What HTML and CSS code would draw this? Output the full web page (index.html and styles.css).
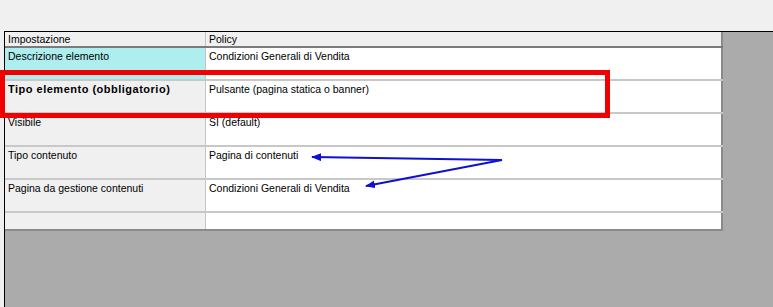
FILE: index.html
```html
<!DOCTYPE html>
<html lang="it">

<head>
    <meta charset="utf-8">
    <title>Impostazioni elemento</title>
    <link rel="stylesheet" href="styles.css">
</head>

<body>

    <div class="toolbar"></div>

    <div class="pannello">
        <table class="griglia">
            <tr class="intestazione">
                <th>Impostazione</th>
                <th>Policy</th>
            </tr>
            <tr>
                <td class="selezionata">Descrizione elemento</td>
                <td>Condizioni Generali di Vendita</td>
            </tr>
            <tr>
                <td class="obbligatorio">Tipo elemento (obbligatorio)</td>
                <td>Pulsante (pagina statica o banner)</td>
            </tr>
            <tr>
                <td>Visibile</td>
                <td>SI (default)</td>
            </tr>
            <tr>
                <td>Tipo contenuto</td>
                <td>Pagina di contenuti</td>
            </tr>
            <tr>
                <td>Pagina da gestione contenuti</td>
                <td>Condizioni Generali di Vendita</td>
            </tr>
            <tr class="vuota">
                <td></td>
                <td></td>
            </tr>
        </table>
    </div>

    <!-- segni a mano sopra la griglia -->
    <svg class="note" width="773" height="307" viewBox="0 0 773 307">
        <defs>
            <marker id="punta" markerWidth="10" markerHeight="8" refX="9" refY="4" orient="auto" markerUnits="userSpaceOnUse">
                <path d="M0,0 L10,4 L0,8 Z" fill="#1010d0" />
            </marker>
        </defs>
        <rect x="2.5" y="72.5" width="605" height="43" fill="none" stroke="#f00000" stroke-width="5" />
        <line x1="502" y1="160" x2="312" y2="157" stroke="#1010d0" stroke-width="2" marker-end="url(#punta)" />
        <line x1="502" y1="160" x2="366" y2="186" stroke="#1010d0" stroke-width="2" marker-end="url(#punta)" />
    </svg>

</body>

</html>
```

FILE: styles.css
```css
body {
    margin: 0;
    height: 307px;
    background-color: #f0f0f0;
    font-family: 'Liberation Sans', Arial, sans-serif;
    font-size: 10.5px;
    color: #000;
    overflow: hidden;
    display: flex;
    flex-direction: column;
}

.toolbar {
    height: 31px;
}

.pannello {
    flex-grow: 1;
    margin-left: 4px;
    border-top: 1px solid #000;
    border-left: 1px solid #000;
    background-color: #ababab;
}

.griglia {
    width: 718px;
    border-collapse: collapse;
    table-layout: fixed;
    border-right: 2px solid #8a8a8a;
    border-bottom: 2px solid #8a8a8a;
    background-color: #fff;
}

.griglia th,
.griglia td {
    padding: 2px 3px;
    text-align: left;
    vertical-align: top;
    font-weight: normal;
    line-height: 13px;
    white-space: nowrap;
}

.griglia th:first-child,
.griglia td:first-child {
    width: 194px;
    background-color: #f0f0f0;
    border-right: 1px solid #c4c4c4;
}

.griglia td {
    height: 27px;
    border-bottom: 2px solid #c8c8c8;
}

.intestazione th {
    height: 8px;
    padding-top: 1px;
    padding-bottom: 0;
    background-color: #f0f0f0;
    border-bottom: 2px solid #7a7a7a;
}

.griglia td.selezionata {
    background-color: #aeeeee;
}

.griglia td.obbligatorio {
    font-weight: bold;
    font-size: 11px;
    letter-spacing: 0.5px;
}

.vuota td {
    height: 12px;
    border-bottom: none;
}

.note {
    position: absolute;
    top: 0;
    left: 0;
    pointer-events: none;
}
```
